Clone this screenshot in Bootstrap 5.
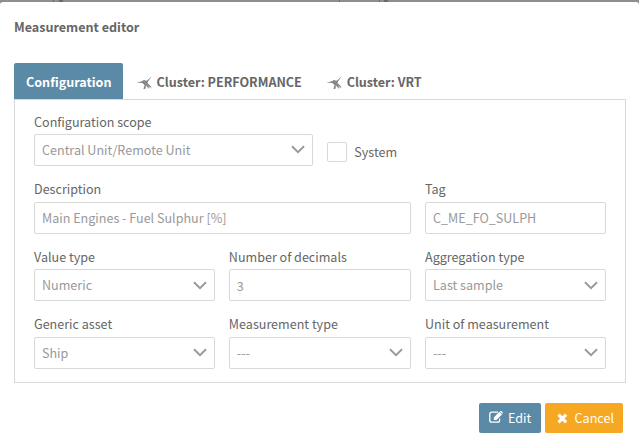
<!DOCTYPE html>
<html lang="en">
<head>
<meta charset="utf-8">
<title>Measurement editor</title>
<link href="https://cdn.jsdelivr.net/npm/bootstrap@5.3.0/dist/css/bootstrap.min.css" rel="stylesheet">
<style>
:root{--line:#d9d9d9;--ink:#666;--dim:#999;--blue:#5b8aa6;--orange:#f7a823}
body{font-family:"Noto Sans CJK SC","Open Sans",sans-serif;font-size:12.57px;line-height:20px;color:var(--ink);background:#8f8d8d;overflow:hidden}
.backdrop-strip{height:2px}
.backdrop-strip i{height:2px;background:#6b6969}
.editor{height:436px;border-radius:3px 3px 0 0;padding:15px 13px 0 14px}
.editor h1{font-size:12.57px;line-height:20px;margin:0 0 26px}
.editor .nav-tabs{border:0;--bs-nav-tabs-border-width:0}
.editor .nav-link{height:36px;padding:9px 12px 7px;line-height:20px;font-weight:700;color:var(--ink);border-radius:2px 2px 0 0;display:flex;align-items:center}
.editor .nav-link.active{color:#fff;background:var(--blue);width:109px}
.editor .nav-link svg{width:17px;height:15px;margin:0 4px 0 .5px}
.editor .nav-item + .nav-item + .nav-item{margin-left:-.7px}
.panel{height:284px;border:1px solid var(--line);padding:11.65px 19px 0}
.panel .row{--bs-gutter-x:14.5px;height:67.6px}
.panel .col-4:nth-child(2):not(:last-child){padding-left:6.6px}
.form-label{display:block;height:20px;line-height:20px;margin:0 0 2.35px}
.panel .form-control,.panel .form-select{height:32px;font-size:12.57px;line-height:20px;padding:5px 7px;border:1px solid var(--line);border-radius:2px;color:var(--dim);background-color:#fff;opacity:1}
.panel .form-select{padding-right:34px;background-size:14px 9px;background-position:right 7px center;background-image:url("data:image/svg+xml,%3Csvg xmlns='http://www.w3.org/2000/svg' viewBox='0 0 14 9'%3E%3Cpath d='M1 1.3 7 7.2 13 1.3' fill='none' stroke='%23999' stroke-width='1.9'/%3E%3C/svg%3E")}
.check-line{padding-top:30.35px;gap:7px}
.panel .form-check-input{width:20px;height:20px;margin:0;border:1px solid var(--line);border-radius:2px;opacity:1;background-color:#fff}
.actions{gap:4px;padding:20px 3px 0 0}
.actions .btn{height:30px;padding:0 9px 0 10px;font-size:12.57px;line-height:20px;border:0;border-radius:2px;color:#fff;display:flex;align-items:center}
.btn-edit,.btn-edit:hover{background:var(--blue);width:62px}
.btn-cancel,.btn-cancel:hover{background:var(--orange);width:78px}
.btn-edit svg{width:14px;height:12px;margin:-2px 5px 0 0}
.btn-cancel svg{width:11px;height:11px;margin:0 7px 0 2px}
</style>
<script src="https://cdn.jsdelivr.net/npm/bootstrap@5.3.0/dist/js/bootstrap.bundle.min.js" defer></script>
</head>
<body>
<svg class="d-none" xmlns="http://www.w3.org/2000/svg">
  <symbol id="bird" viewBox="0 0 17 15">
    <path d="M.5 7.6 5.3 6.6 8 5 10 5.8 11.2 5.6 15.8 1 12 6.4 11.4 8 16 12.6 12.4 11 13 14 10.6 11.2 9.8 10 9.6 13.8 7.4 14 8.6 10 6.4 7.9z" fill="#808080"/>
    <path d="M4.5 7.4 8.3 6 11.3 9.2M10.5 8.9 14.8 13.2" fill="none" stroke="#77a0b8" stroke-width=".9"/>
    <path d="M8.5 7.6 10.2 9.9M12 9.2 14.8 11.9" fill="none" stroke="#a98668" stroke-width=".7"/>
  </symbol>
</svg>
<div class="backdrop-strip d-flex"><i style="width:1px;margin-left:53px"></i><i style="width:4px;margin-left:5px"></i><i style="width:1px;margin-left:276px"></i><i style="width:1px;margin-left:39px"></i><i style="width:4px;margin-left:4px"></i></div>
<main class="editor bg-white">
  <h1 class="fw-bold">Measurement editor</h1>
  <ul class="nav nav-tabs flex-nowrap">
    <li class="nav-item"><a class="nav-link active" href="#">Configuration</a></li>
    <li class="nav-item"><a class="nav-link" href="#"><svg><use href="#bird"/></svg>Cluster: PERFORMANCE</a></li>
    <li class="nav-item"><a class="nav-link" href="#"><svg><use href="#bird"/></svg>Cluster: VRT</a></li>
  </ul>
  <form class="panel">
    <div class="row">
      <div class="col-6"><label class="form-label">Configuration scope</label><select class="form-select" disabled><option>Central Unit/Remote Unit</option></select></div>
      <div class="col-6"><div class="check-line d-flex align-items-center"><input class="form-check-input" type="checkbox" id="sys"><label for="sys">System</label></div></div>
    </div>
    <div class="row">
      <div class="col-8"><label class="form-label">Description</label><input class="form-control" disabled value="Main Engines - Fuel Sulphur [%]"></div>
      <div class="col-4"><label class="form-label">Tag</label><input class="form-control" disabled value="C_ME_FO_SULPH"></div>
    </div>
    <div class="row">
      <div class="col-4"><label class="form-label">Value type</label><select class="form-select" disabled><option>Numeric</option></select></div>
      <div class="col-4"><label class="form-label">Number of decimals</label><input class="form-control" disabled value="3"></div>
      <div class="col-4"><label class="form-label">Aggregation type</label><select class="form-select" disabled><option>Last sample</option></select></div>
    </div>
    <div class="row">
      <div class="col-4"><label class="form-label">Generic asset</label><select class="form-select" disabled><option>Ship</option></select></div>
      <div class="col-4"><label class="form-label">Measurement type</label><select class="form-select" disabled><option>---</option></select></div>
      <div class="col-4"><label class="form-label">Unit of measurement</label><select class="form-select" disabled><option>---</option></select></div>
    </div>
  </form>
  <div class="actions d-flex justify-content-end">
    <button class="btn btn-edit" type="button"><svg viewBox="0 0 14 12"><path d="M9 1.2H2.8Q.8 1.2.8 3.2V9.2Q.8 11.2 2.8 11.2H8.6Q10.6 11.2 10.6 9.2V7.6" fill="none" stroke="#fff" stroke-width="1.3"/><path d="M4.8 9V6.4L10.4.8 13 3.4 7.4 9zM10.9.4 11.4 0H12.5L13.6 1.2Q14 2 13.6 2.5L13.3 2.8z" fill="#fff"/></svg>Edit</button>
    <button class="btn btn-cancel" type="button"><svg viewBox="0 0 11 11"><path d="M1.5 1.5 9.5 9.5M9.5 1.5 1.5 9.5" stroke="#fff" stroke-width="3.2"/></svg>Cancel</button>
  </div>
</main>
</body>
</html>
